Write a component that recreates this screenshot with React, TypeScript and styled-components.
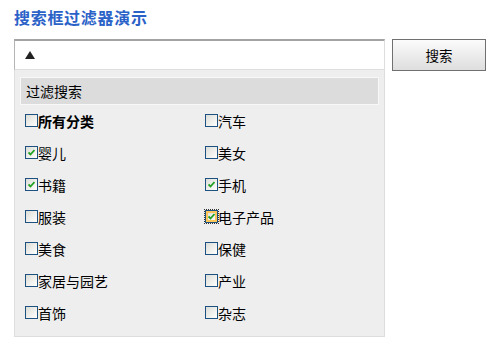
import { createGlobalStyle, styled } from 'styled-components';

const GlobalStyle = createGlobalStyle`
  body {
    margin: 0;
    background: #fff;
    font-family: "Noto Sans CJK SC", "DejaVu Sans", sans-serif;
    color: #000;
  }
`;

const Page = styled.div`
  padding: 7px 14px 0;
`;

const Title = styled.h1`
  margin: 0 0 12px;
  font-size: 16px;
  line-height: 20px;
  font-weight: bold;
  letter-spacing: 0.7px;
  color: #2b62c8;
`;

const SearchRow = styled.div`
  display: flex;
  align-items: flex-start;
  gap: 7px;
`;

const Field = styled.div`
  width: 371px;
`;

const InputBox = styled.div`
  box-sizing: border-box;
  height: 31px;
  display: flex;
  align-items: center;
  padding-left: 10px;
  background: #fff;
  border: 1px solid #dedede;
  border-top: 2px solid #a3a3a3;
  border-left: 1px solid #b4b4b4;
`;

const Button = styled.button`
  box-sizing: border-box;
  width: 94px;
  height: 32px;
  border: 1px solid #707070;
  background: linear-gradient(#fbfbfb, #dedede);
  font-family: inherit;
  font-size: 13.5px;
  color: #000;
  padding: 0;
`;

const Panel = styled.div`
  box-sizing: border-box;
  height: 267px;
  background: #eeeeee;
  border: 1px solid #dddddd;
  border-top: none;
  padding: 7px 5px 6px;
`;

const PanelHeader = styled.div`
  box-sizing: border-box;
  height: 28px;
  display: flex;
  align-items: center;
  padding-left: 5px;
  background: #dcdcdc;
  border: 1px solid #f8f8f8;
  font-size: 14px;
`;

const Grid = styled.div`
  display: grid;
  grid-template-columns: 180px 180px;
  grid-auto-rows: 32px;
  padding-left: 5px;
`;

const Item = styled.label<{ $bold?: boolean }>`
  display: flex;
  align-items: center;
  font-size: 14px;
  font-weight: ${(p) => (p.$bold ? 'bold' : 'normal')};
`;

const Box = styled.span<{ $hover?: boolean }>`
  box-sizing: border-box;
  width: 13px;
  height: 13px;
  flex: none;
  display: flex;
  align-items: center;
  justify-content: center;
  border: 1px solid #1c5180;
  background: linear-gradient(135deg, #dcdcd7, #ffffff);
  box-shadow: ${(p) => (p.$hover ? 'inset 0 0 0 2px #fbc55a' : 'none')};
  outline: ${(p) => (p.$hover ? '1px dotted #333' : 'none')};
  outline-offset: 0;
  margin-top: -1px;
`;

const items: { label: string; checked?: boolean; bold?: boolean; hover?: boolean }[] = [
  { label: '所有分类', bold: true },
  { label: '汽车' },
  { label: '婴儿', checked: true },
  { label: '美女' },
  { label: '书籍', checked: true },
  { label: '手机', checked: true },
  { label: '服装' },
  { label: '电子产品', checked: true, hover: true },
  { label: '美食' },
  { label: '保健' },
  { label: '家居与园艺' },
  { label: '产业' },
  { label: '首饰' },
  { label: '杂志' },
];

const Check = () => (
  <svg width="7" height="7" viewBox="0 0 7 7">
    <path d="M0.5 3.5 L2.5 5.5 L6.5 1" stroke="#21a121" strokeWidth="1.8" fill="none" />
  </svg>
);

const App = () => (
  <>
    <GlobalStyle />
    <Page>
      <Title>搜索框过滤器演示</Title>
      <SearchRow>
        <Field>
          <InputBox>
            <svg width="10" height="8" viewBox="0 0 10 8">
              <polygon points="5,0 10,8 0,8" fill="#222" />
            </svg>
          </InputBox>
          <Panel>
            <PanelHeader>过滤搜索</PanelHeader>
            <Grid>
              {items.map((it) => (
                <Item key={it.label} $bold={it.bold}>
                  <Box $hover={it.hover}>{it.checked && <Check />}</Box>
                  {it.label}
                </Item>
              ))}
            </Grid>
          </Panel>
        </Field>
        <Button>搜索</Button>
      </SearchRow>
    </Page>
  </>
);

export default App;
